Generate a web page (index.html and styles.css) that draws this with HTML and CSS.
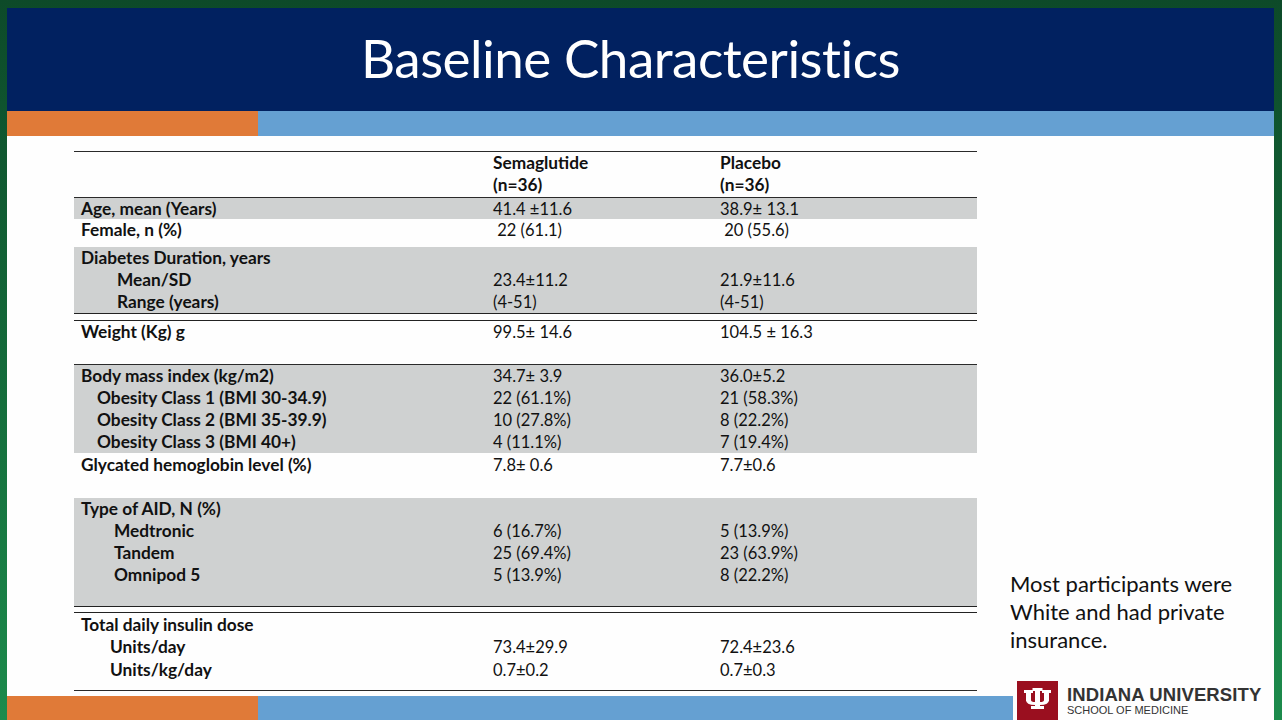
FILE: index.html
```html
<!DOCTYPE html>
<html lang="en">
<head>
<meta charset="utf-8">
<title>Baseline Characteristics</title>
<link rel="stylesheet" href="styles.css">
</head>
<body>
<div class="slide">
  <header class="header"><h1 class="title">Baseline Characteristics</h1></header>
  <div class="band"><div class="band-orange"></div><div class="band-blue"></div></div>
  <main class="content">
    <div class="table">
      <div class="row head">
        <div class="lbl"></div>
        <div class="val b">Semaglutide<br>(n=36)</div>
        <div class="val b">Placebo<br>(n=36)</div>
      </div>
      <div class="row gray r-age">
        <div class="lbl">Age, mean (Years)</div>
        <div class="val">41.4 ±11.6</div>
        <div class="val">38.9± 13.1</div>
      </div>
      <div class="row r-female">
        <div class="lbl">Female, n (%)</div>
        <div class="val">&nbsp;22 (61.1)</div>
        <div class="val">&nbsp;20 (55.6)</div>
      </div>
      <div class="row gray r-dur">
        <div class="lbl">Diabetes Duration, years<br><span class="i36">Mean/SD</span><br><span class="i36">Range (years)</span></div>
        <div class="val"><br>23.4±11.2<br>(4-51)</div>
        <div class="val"><br>21.9±11.6<br>(4-51)</div>
      </div>
      <div class="row r-weight">
        <div class="lbl">Weight (Kg) g</div>
        <div class="val">99.5± 14.6</div>
        <div class="val">104.5 ± 16.3</div>
      </div>
      <div class="row gray r-bmi">
        <div class="lbl">Body mass index (kg/m2)<br><span class="i16">Obesity Class 1 (BMI 30-34.9)</span><br><span class="i16">Obesity Class 2 (BMI 35-39.9)</span><br><span class="i16">Obesity Class 3 (BMI 40+)</span></div>
        <div class="val">34.7± 3.9<br>22 (61.1%)<br>10 (27.8%)<br>4 (11.1%)</div>
        <div class="val">36.0±5.2<br>21 (58.3%)<br>8 (22.2%)<br>7 (19.4%)</div>
      </div>
      <div class="row r-hba1c">
        <div class="lbl">Glycated hemoglobin level (%)</div>
        <div class="val">7.8± 0.6</div>
        <div class="val">7.7±0.6</div>
      </div>
      <div class="row gray r-aid">
        <div class="lbl">Type of AID, N (%)<br><span class="i33">Medtronic</span><br><span class="i33">Tandem</span><br><span class="i33">Omnipod 5</span></div>
        <div class="val"><br>6 (16.7%)<br>25 (69.4%)<br>5 (13.9%)</div>
        <div class="val"><br>5 (13.9%)<br>23 (63.9%)<br>8 (22.2%)</div>
      </div>
      <div class="row r-tdd">
        <div class="lbl">Total daily insulin dose<br><span class="i29">Units/day</span><br><span class="i29">Units/kg/day</span></div>
        <div class="val"><br>73.4±29.9<br>0.7±0.2</div>
        <div class="val"><br>72.4±23.6<br>0.7±0.3</div>
      </div>
    </div>
    <aside class="note">Most participants were White and had private insurance.</aside>
  </main>
  <div class="band bottom"><div class="band-orange"></div><div class="band-blue"></div></div>
  <div class="logo">
    <svg class="trident" viewBox="0 0 41 39" width="41" height="39" aria-hidden="true">
      <rect width="41" height="39" fill="#9a0f1f"/>
      <g fill="#ffffff">
        <rect x="7" y="9" width="9" height="3"/>
        <rect x="9" y="10" width="5" height="10"/>
        <rect x="25" y="9" width="9" height="3"/>
        <rect x="27" y="10" width="5" height="10"/>
        <rect x="15.5" y="7" width="10" height="3"/>
        <rect x="18" y="8" width="5" height="18"/>
        <path d="M9 18 H14 V19 Q14 21 18 21 V24 Q9 24 9 19 Z"/>
        <path d="M32 18 H27 V19 Q27 21 23 21 V24 Q32 24 32 19 Z"/>
        <rect x="14" y="25" width="13" height="3"/>
      </g>
    </svg>
    <div class="logo-text">
      <div class="iu">INDIANA UNIVERSITY</div>
      <div class="som">SCHOOL OF MEDICINE</div>
    </div>
  </div>
</div>
</body>
</html>
```
FILE: styles.css
```css
html, body {
  margin: 0;
  padding: 0;
}
body {
  width: 1282px;
  height: 720px;
  overflow: hidden;
  background: linear-gradient(to bottom, #0d4a29 0%, #146a3a 50%, #1c8b4c 100%);
  font-family: Lato, "Open Sans", sans-serif;
  color: #111;
}
.slide {
  position: relative;
  margin: 8px 8px 0 7px;
  height: 712px;
  background: #fefefe;
  display: flex;
  flex-direction: column;
}
.header {
  height: 103px;
  background: #012160;
  display: flex;
  align-items: center;
  justify-content: center;
}
.title {
  margin: 0 0 4px -20px;
  font-weight: 400;
  font-size: 53px;
  color: #ffffff;
  letter-spacing: -0.5px;
}
.band {
  height: 25px;
  display: flex;
}
.band-orange {
  width: 251px;
  background: #e07a38;
}
.band-blue {
  flex: 1;
  background: #65a0d2;
}
.band.bottom {
  height: 24px;
}
.content {
  flex: 1;
  display: flex;
  padding: 15px 0 0 67px;
}
.table {
  width: 903px;
  border-top: 1px solid #2a2a2a;
  font-size: 16.5px;
  line-height: 22px;
}
.row {
  display: grid;
  grid-template-columns: 412px 227px 1fr;
  padding-left: 7px;
}
.row.gray {
  background: #cfd1d1;
}
.lbl {
  font-weight: 700;
  font-size: 17.3px;
}
.val.b {
  font-weight: 700;
  font-size: 17.3px;
}
.i36 { padding-left: 36px; }
.i16 { padding-left: 16px; }
.i33 { padding-left: 33px; }
.i29 { padding-left: 29px; }
.head {
  height: 45px;
  border-bottom: 1px solid #2a2a2a;
}
.r-age { height: 21px; }
.r-female { height: 28px; }
.r-dur {
  height: 66px;
  border-bottom: 1px solid #222;
}
.r-weight {
  margin-top: 6px;
  border-top: 1px solid #222;
  height: 43px;
  border-bottom: 1px solid #2a2a2a;
}
.r-bmi { height: 88px; }
.r-hba1c {
  height: 45px;
  padding-top: 1px;
  box-sizing: border-box;
}
.r-aid {
  height: 108px;
  border-bottom: 1px solid #222;
}
.r-tdd {
  margin-top: 5px;
  border-top: 1px solid #222;
  height: 79px;
  padding-top: 1px;
  box-sizing: border-box;
  border-bottom: 1px solid #2a2a2a;
}
.r-tdd .lbl, .r-tdd .val {
  line-height: 22.4px;
}
.note {
  align-self: flex-end;
  margin: 0 0 42px 33px;
  width: 250px;
  font-size: 22px;
  line-height: 28px;
  color: #111;
}
.logo {
  position: absolute;
  right: 0;
  bottom: 0;
  width: 261px;
  height: 39px;
  background: #fefefe;
  display: flex;
  align-items: flex-start;
  gap: 9px;
  padding: 0 0 0 4px;
  box-sizing: border-box;
}
.trident {
  display: block;
  flex: none;
}
.logo-text {
  font-family: "Liberation Sans", Arial, sans-serif;
  color: #333;
  padding-top: 4px;
}
.iu {
  font-weight: 700;
  font-size: 18.5px;
  line-height: 19px;
  letter-spacing: 0.1px;
}
.som {
  font-size: 11px;
  line-height: 12px;
}
```
